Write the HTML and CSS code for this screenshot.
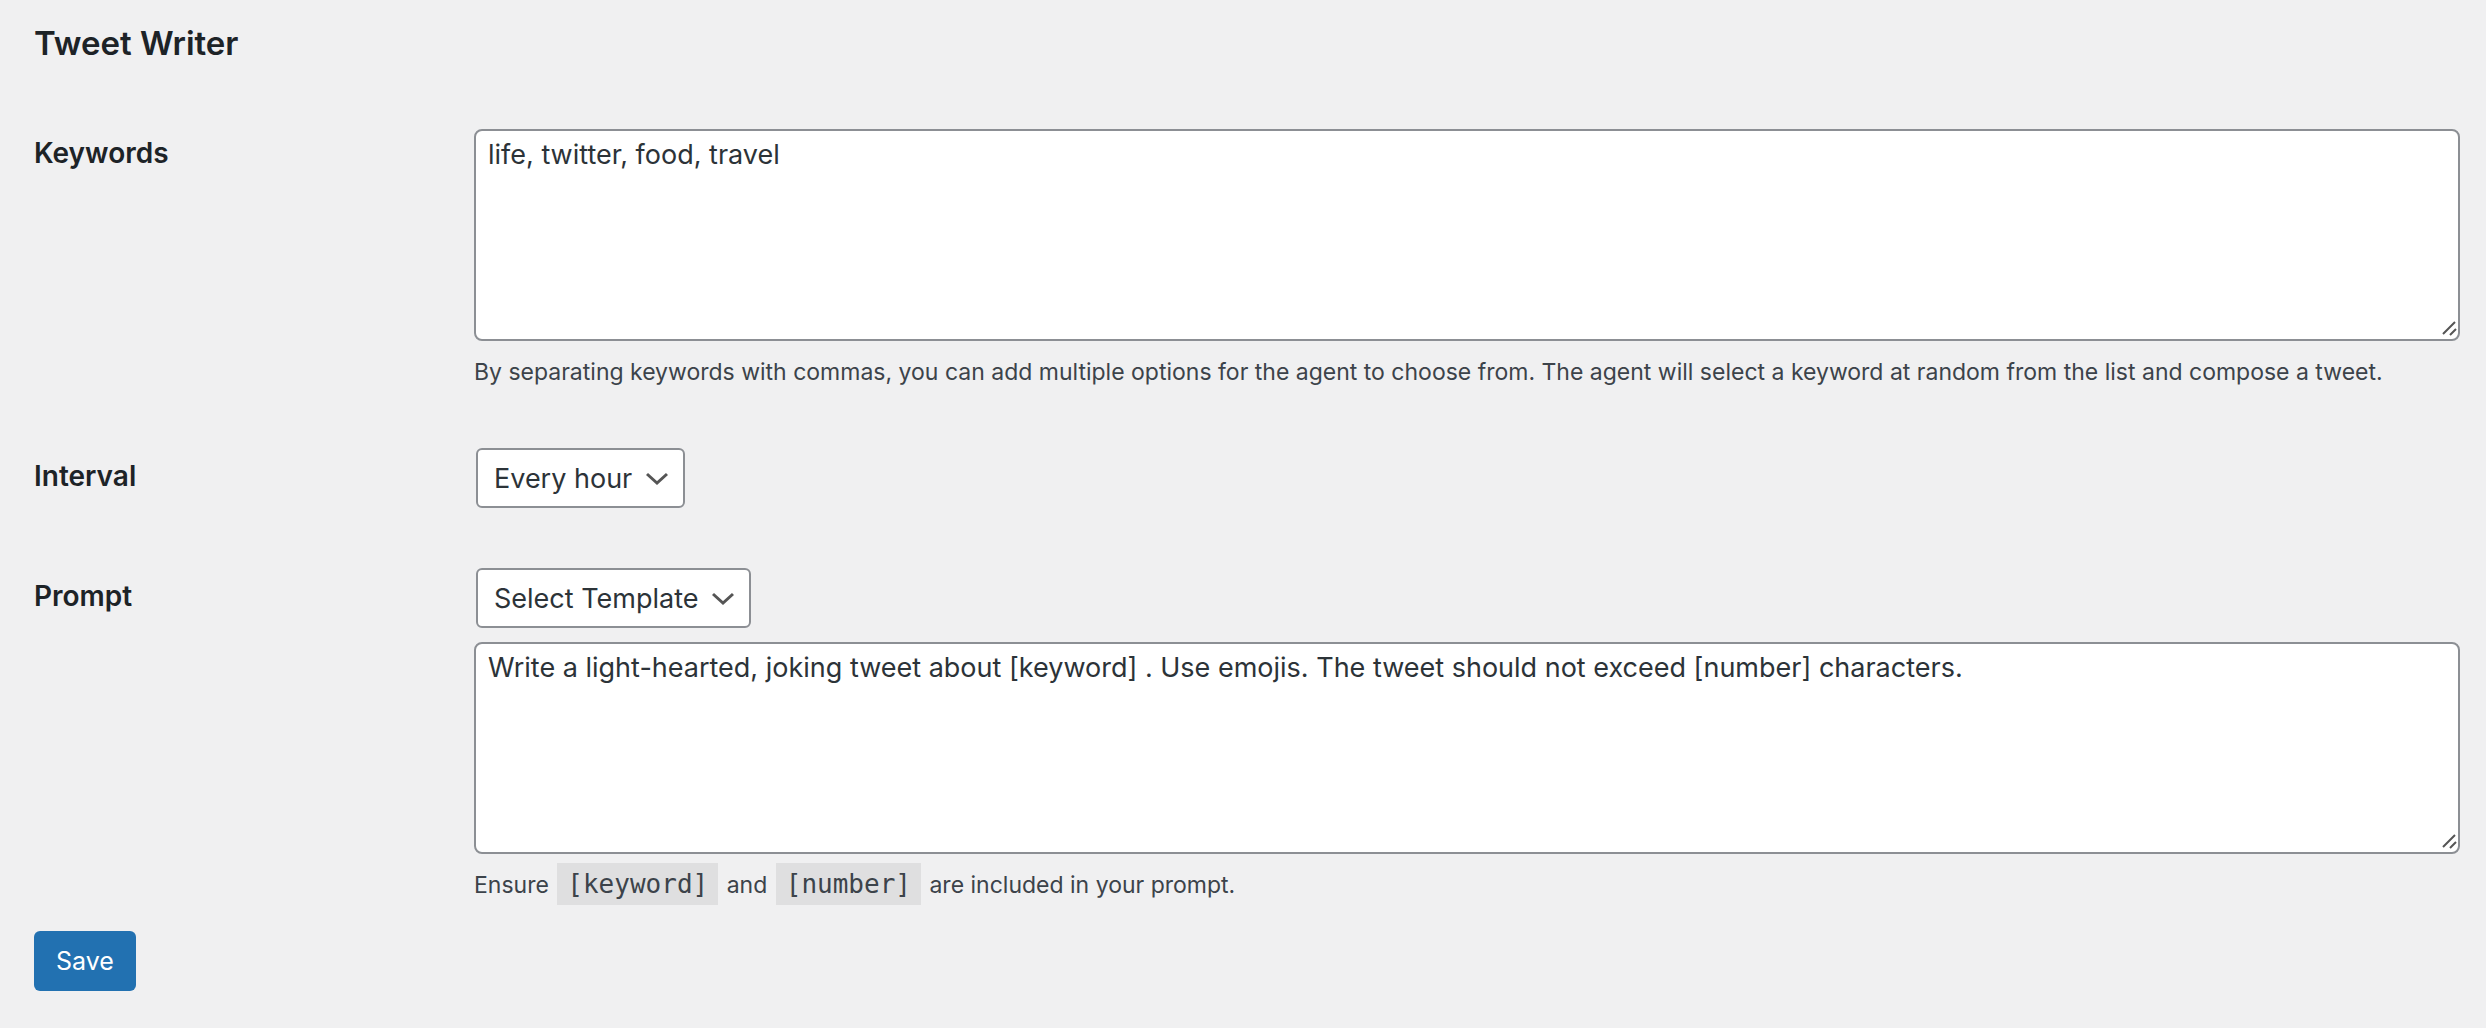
FILE: index.html
```html
<!DOCTYPE html>
<html lang="en">
<head>
<meta charset="utf-8">
<meta name="viewport" content="width=device-width, initial-scale=1">
<title>Tweet Writer</title>
<link rel="stylesheet" href="styles.css">
</head>
<body>
<main class="page">
  <h2 class="title">Tweet Writer</h2>
  <form class="form">
    <div class="row row-keywords">
      <label class="label" for="keywords">Keywords</label>
      <div class="field">
        <div class="area-wrap">
          <textarea class="area" id="keywords" rows="5">life, twitter, food, travel</textarea>
          <svg class="grip" viewBox="0 0 16 16" aria-hidden="true"><path d="M2 14L14 2M9 15L15 9"/></svg>
        </div>
        <p class="description">By separating keywords with commas, you can add multiple options for the agent to choose from. The agent will select a keyword at random from the list and compose a tweet.</p>
      </div>
    </div>
    <div class="row row-select">
      <label class="label" for="interval">Interval</label>
      <div class="field">
        <div class="select-wrap">
          <select class="select" id="interval"><option>Every hour</option></select>
          <svg class="chevron" viewBox="0 0 22 14" aria-hidden="true"><path d="M1 2l10 9 10-9"/></svg>
        </div>
      </div>
    </div>
    <div class="row row-select">
      <label class="label" for="prompt">Prompt</label>
      <div class="field">
        <div class="select-wrap">
          <select class="select" aria-label="Prompt template"><option>Select Template</option></select>
          <svg class="chevron" viewBox="0 0 22 14" aria-hidden="true"><path d="M1 2l10 9 10-9"/></svg>
        </div>
        <div class="area-wrap area-below">
          <textarea class="area" id="prompt" rows="5">Write a light-hearted, joking tweet about [keyword] . Use emojis. The tweet should not exceed [number] characters.</textarea>
          <svg class="grip" viewBox="0 0 16 16" aria-hidden="true"><path d="M2 14L14 2M9 15L15 9"/></svg>
        </div>
        <p class="description">Ensure <code class="code">[keyword]</code> and <code class="code">[number]</code> are included in your prompt.</p>
      </div>
    </div>
    <button class="save" type="submit">Save</button>
  </form>
</main>
</body>
</html>
```
FILE: styles.css
```css
* { box-sizing: border-box; }

body {
  margin: 0;
  background: #f0f0f1;
  color: #1d2327;
  font-family: Inter, "Liberation Sans", sans-serif;
  font-size: 27px;
}

.page { padding: 23px 26px 34px 34px; }

.title {
  margin: 0 0 66px;
  font-size: 33px;
  line-height: 40px;
  font-weight: 600;
}

.row {
  display: grid;
  grid-template-columns: 440px minmax(0, 1fr);
}

.row-keywords { margin-bottom: 54px; }
.row-select { margin-bottom: 60px; }
.row-select:last-of-type { margin-bottom: 24px; }

.label {
  padding-top: 8px;
  font-size: 28px;
  line-height: 32px;
  font-weight: 600;
}

.row-select .label { padding-top: 12px; }

.area-wrap { position: relative; }
.area-below { margin-top: 14px; }

.area {
  display: block;
  width: 100%;
  padding: 4px 12px;
  border: 2px solid #8c8f94;
  border-radius: 8px;
  background: #fff;
  color: #2c3338;
  font: inherit;
  line-height: 40px;
  resize: none;
}

.grip {
  position: absolute;
  right: 3px;
  bottom: 5px;
  width: 16px;
  height: 16px;
  fill: none;
  stroke: #555;
  stroke-width: 2;
}

.description {
  margin: 9px 0 0;
  color: #3c434a;
  font-size: 23px;
  line-height: 44px;
}

.select-wrap {
  position: relative;
  display: table;
  margin-left: 2px;
}

.select {
  appearance: none;
  display: block;
  height: 60px;
  padding: 0 50px 0 16px;
  border: 2px solid #8c8f94;
  border-radius: 6px;
  background: #fff;
  color: #2c3338;
  font: inherit;
}

.chevron {
  position: absolute;
  top: 24px;
  right: 17px;
  width: 22px;
  height: 14px;
  fill: none;
  stroke: #555;
  stroke-width: 3;
  pointer-events: none;
}

.code {
  margin: 0 2px;
  padding: 6px 10px;
  background: #dfdfe0;
  font-family: "DejaVu Sans Mono", monospace;
  font-size: 26px;
  line-height: 1;
}

.save {
  display: block;
  height: 60px;
  padding: 0 22px;
  border: 0;
  border-radius: 6px;
  background: #2271b1;
  color: #fff;
  font: inherit;
  font-size: 25px;
}
```
